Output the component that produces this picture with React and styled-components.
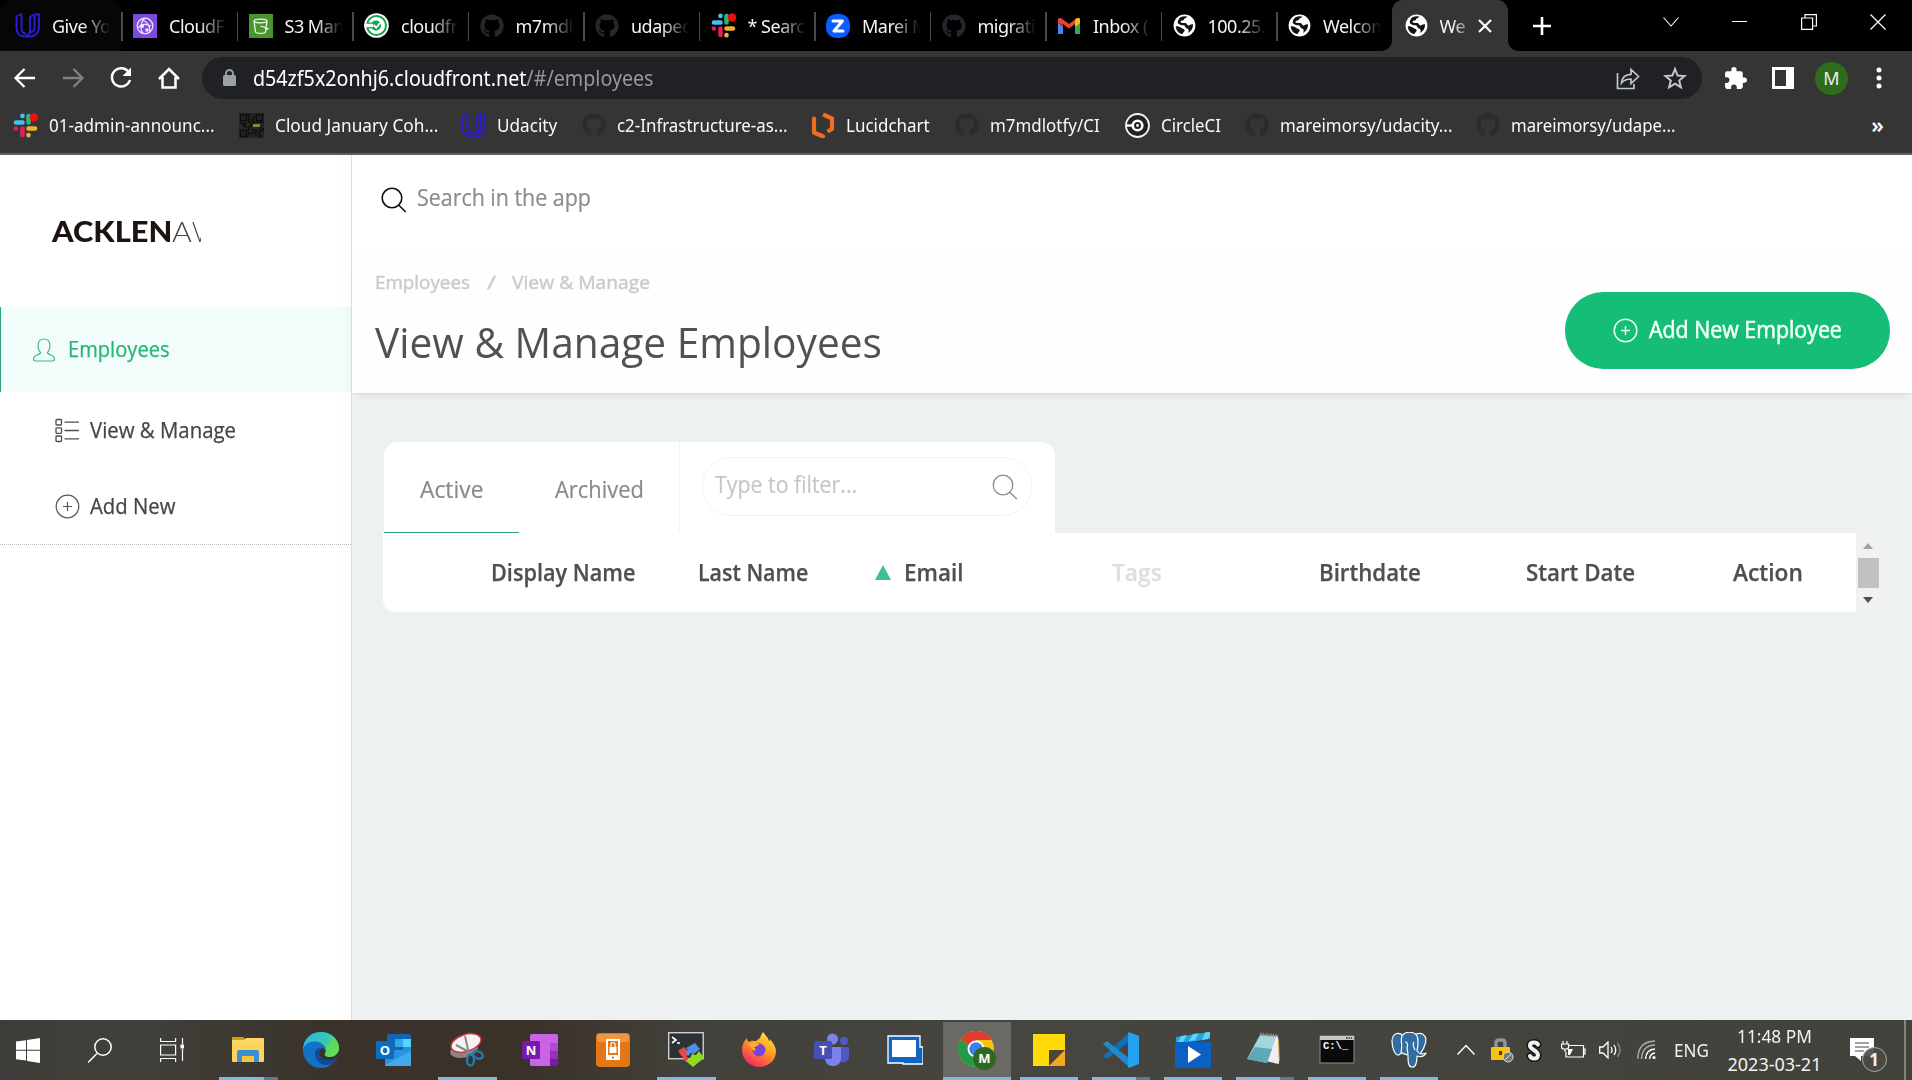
import React, { useLayoutEffect, useRef, useState } from "react";
import styled, { createGlobalStyle, css } from "styled-components";
import { FaGithub } from "react-icons/fa";

const UI = `"Noto Sans", "Open Sans", sans-serif`;
const PAGE = `"Open Sans", "Noto Sans", sans-serif`;

const Global = createGlobalStyle`
  * { box-sizing: border-box; }
  html, body { margin: 0; padding: 0; overflow: hidden; background: #fff; }
  svg { display: block; flex: none; }
`;

/* ---------- text that keeps a fixed measure ---------- */
const FitBox = styled.span`
  display: block;
  flex: none;
  width: ${(p) => p.$w}px;
  white-space: nowrap;
`;
const FitInner = styled.span`
  display: inline-block;
  transform-origin: 0 50%;
`;
function Fit({ w, children }) {
  const ref = useRef(null);
  const [scale, setScale] = useState(1);
  useLayoutEffect(() => {
    if (ref.current) setScale(w / ref.current.offsetWidth);
  }, [w]);
  return (
    <FitBox $w={w}>
      <FitInner ref={ref} style={{ transform: `scaleX(${scale})` }}>
        {children}
      </FitInner>
    </FitBox>
  );
}

/* ---------- shell ---------- */
const Screen = styled.div`
  width: 1912px;
  height: 1080px;
  display: flex;
  flex-direction: column;
  overflow: hidden;
  font-family: ${UI};
`;

/* ---------- browser chrome ---------- */
const TabStrip = styled.div`
  display: flex;
  height: 51px;
  background: #000;
  color: #f6f6f6;
  font-size: 18px;
`;
const Tab = styled.div`
  position: relative;
  display: flex;
  align-items: center;
  flex: none;
  width: ${(p) => (p.$first ? 121.5 : 115.5)}px;
  padding-left: ${(p) => (p.$first ? 15 : p.$active ? 12.5 : 11.5)}px;
  ${(p) =>
    p.$first &&
    css`
      background: #060606;
      border-radius: 12px 12px 0 0;
    `}
  ${(p) =>
    p.$line &&
    css`
      &::after {
        content: "";
        position: absolute;
        right: -1px;
        top: 12px;
        width: 1.5px;
        height: 29px;
        background: #4a4a4a;
      }
    `}
  ${(p) =>
    p.$active &&
    css`
      background: #353535;
      border-radius: 11px 11px 0 0;
      &::before,
      &::after {
        content: "";
        position: absolute;
        bottom: 0;
        width: 10px;
        height: 10px;
      }
      &::before {
        left: -10px;
        background: radial-gradient(circle at 0 0, transparent 9.5px, #353535 10px);
      }
      &::after {
        right: -10px;
        background: radial-gradient(circle at 100% 0, transparent 9.5px, #353535 10px);
      }
    `}
`;
const TabText = styled.span`
  flex: none;
  width: ${(p) => p.$w}px;
  margin-left: 12px;
  overflow: hidden;
  white-space: pre;
  letter-spacing: -0.5px;
  line-height: 28px;
  mask-image: linear-gradient(90deg, #000 ${(p) => (p.$w > 40 ? p.$w - 28 : 12)}px, transparent ${(p) => (p.$w > 40 ? 100 : 130)}%);
`;
const TabClose = styled.span`
  display: flex;
  margin-left: 11px;
`;
const NewTab = styled.div`
  display: flex;
  align-items: center;
  padding-left: 25px;
  flex: 1;
`;
const WindowButtons = styled.div`
  display: flex;
  flex: none;
`;
const WindowButton = styled.div`
  width: 69px;
  height: 43px;
  display: flex;
  align-items: center;
  justify-content: center;
`;

const Toolbar = styled.div`
  display: flex;
  align-items: center;
  height: 54px;
  padding: 0 13px;
  background: #353535;
`;
const NavButtons = styled.div`
  display: flex;
  gap: 24px;
  width: 189px;
`;
const Omnibox = styled.div`
  display: flex;
  align-items: center;
  flex: none;
  width: 1500px;
  height: 42px;
  padding: 0 15px 0 18.5px;
  border-radius: 21px;
  background: #202124;
  color: #fff;
  font-size: 21px;
  line-height: 40px;
`;
const UrlText = styled.div`
  flex: 1;
  padding-left: 15.5px;
`;
const Dim = styled.span`
  color: #95989c;
`;
const OmniIcons = styled.div`
  display: flex;
  gap: 23px;
`;
const ToolIcons = styled.div`
  display: flex;
  align-items: center;
  flex: 1;
  padding-left: 21px;
`;
const Avatar = styled.div`
  width: 33px;
  height: 33px;
  flex: none;
  margin: 0 28px 0 21px;
  border-radius: 50%;
  background: #2f6b1c;
  color: #e8f0e5;
  font-size: 18px;
  line-height: 33px;
  text-align: center;
`;
const PanelIcon = styled.div`
  width: 22px;
  height: 22px;
  flex: none;
  margin-left: 24px;
  border: 3px solid #fff;
  border-right-width: 8px;
`;

const Bookmarks = styled.div`
  display: flex;
  height: 50px;
  padding: 0 0 8px 12.5px;
  align-items: center;
  background: #353535;
  border-bottom: 2px solid #606060;
  color: #fafafa;
  font-size: 18px;
  line-height: 26px;
`;
const Bookmark = styled.div`
  display: flex;
  align-items: center;
  flex: none;
  gap: 11px;
  width: ${(p) => p.$w}px;
`;
const More = styled.div`
  flex: 1;
  padding-right: 28px;
  padding-bottom: 3px;
  text-align: right;
  font-size: 22px;
  font-weight: 600;
  line-height: 22px;
`;

/* ---------- web page ---------- */
const Page = styled.div`
  display: flex;
  height: 865px;
  font-family: ${PAGE};
  background: #edf1f2;
`;
const Sidebar = styled.aside`
  width: 352px;
  flex: none;
  background: linear-gradient(90deg, #fff 336px, #fdfdfd);
  border-right: 1px solid #dcdede;
`;
const Logo = styled.div`
  display: flex;
  height: 152px;
  width: 201px;
  padding: 59px 0 0 52px;
  overflow: hidden;
  font-family: Lato, sans-serif;
  font-size: 28px;
  line-height: 34px;
  font-weight: 900;
  color: #1d1311;
`;
const LogoThin = styled.span`
  display: flex;
  font-weight: 300;
  color: #444;
`;
const NavItem = styled.div`
  display: flex;
  align-items: center;
  height: ${(p) => p.$h}px;
  gap: ${(p) => (p.$active ? 11.5 : 10)}px;
  padding-left: ${(p) => (p.$active ? 31 : 54.5)}px;
  font-size: 21.5px;
  line-height: 30px;
  color: ${(p) => (p.$active ? "#25b574" : "#454545")};
  -webkit-text-stroke: 0.25px currentColor;
  ${(p) =>
    p.$active &&
    css`
      border-left: 1px solid #2ea182;
      background: linear-gradient(90deg, #f2fdfb 336px, #eef9f7);
    `}
`;
const SideRule = styled.div`
  border-top: 1px dotted #bcbcbc;
`;

const Main = styled.main`
  flex: 1;
  display: flex;
  flex-direction: column;
`;
const AppSearch = styled.div`
  display: flex;
  align-items: center;
  gap: 9.5px;
  height: 101px;
  padding: 0 0 11px 29px;
  background: #fff;
  border-bottom: 1px solid #fbfbfb;
  font-size: 23px;
  line-height: 30px;
  color: #8c8c8c;
  -webkit-text-stroke: 0.2px currentColor;
`;
const PageHeader = styled.header`
  display: flex;
  justify-content: space-between;
  height: 137px;
  padding: 13px 22px 0;
  background: #fefefe;
  box-shadow: 0 5px 8px -4px rgba(90, 100, 95, 0.16), 0 1px 0 rgba(90, 100, 95, 0.06);
`;
const Crumbs = styled.div`
  display: flex;
  height: 26px;
  padding-left: 0.5px;
  font-size: 19px;
  line-height: 26px;
  color: #cbcbcb;
  -webkit-text-stroke: 0.5px currentColor;
`;
const Slash = styled.span`
  margin: 0 16px 0 17px;
`;
const Title = styled.h1`
  margin: 17px 0 0 0.5px;
  font-size: 42.5px;
  font-weight: 400;
  line-height: 60px;
  color: #515151;
`;
const AddButton = styled.div`
  display: flex;
  align-items: center;
  gap: 11px;
  width: 325px;
  height: 77px;
  margin-top: 23px;
  padding: 0 0 1px 48px;
  border-radius: 38px;
  background: #15bd76;
  color: #effff8;
  font-size: 23px;
  line-height: 30px;
  -webkit-text-stroke: 0.6px currentColor;
`;
const Content = styled.section`
  padding: 49px 32px 0 31px;
`;
const FilterCard = styled.div`
  display: flex;
  width: 671px;
  height: 91px;
  margin-left: 1px;
  border-radius: 14px 14px 0 0;
  background: #fff;
  font-size: 23px;
  line-height: 30px;
  color: #8a8a8a;
  -webkit-text-stroke: 0.2px currentColor;
`;
const FilterTab = styled.div`
  width: ${(p) => p.$w}px;
  padding: 32px 0 0 36px;
  border-bottom: ${(p) => (p.$on ? "1px solid #2ea182" : "0")};
`;
const FilterInputArea = styled.div`
  flex: 1;
  padding: 15px 0 0 22px;
  border-left: 1px solid #f2f4f4;
`;
const FilterInput = styled.div`
  display: flex;
  align-items: center;
  justify-content: space-between;
  width: 330px;
  height: 59px;
  padding: 0 13.5px 0 12px;
  border: 1px solid #f3f3f3;
  border-radius: 29px;
  color: #c6c6c6;
`;
const Lift = styled.span`
  padding-bottom: ${(p) => p.$by}px;
`;
const TableWrap = styled.div`
  display: flex;
  height: 79px;
`;
const HeadRow = styled.div`
  display: grid;
  grid-template-columns: 107.5px repeat(6, 207px) 1fr;
  align-items: center;
  width: 1473px;
  padding-bottom: 1px;
  background: #fff;
  border-radius: 0 0 0 12px;
  font-size: 23px;
  font-weight: 600;
  line-height: 30px;
  color: #4f4f4f;
  -webkit-text-stroke: 0.25px currentColor;
`;
const HeadCell = styled.div`
  display: flex;
  align-items: center;
  color: ${(p) => (p.$muted ? "#dedede" : "inherit")};
`;
const SortMark = styled.span`
  width: 0;
  margin-left: -30px;
  margin-right: 13px;
  border: 8.5px solid transparent;
  border-top: 0;
  border-bottom: 15px solid #41c08b;
`;
const Scrollbar = styled.div`
  display: flex;
  flex-direction: column;
  align-items: center;
  width: 24px;
  padding: 10px 0 0 0;
  background: #f1f1f1;
`;
const Arrow = styled.span`
  border: 5.5px solid transparent;
  ${(p) => (p.$up ? "border-top: 0; border-bottom: 6.5px solid #a3a3a3;" : "border-bottom: 0; border-top: 6.5px solid #4f4f4f;")}
`;
const Thumb = styled.span`
  width: 21px;
  height: 30px;
  margin: 9px 0 9px;
  background: #c1c1c1;
`;

/* ---------- taskbar ---------- */
const Taskbar = styled.footer`
  display: flex;
  height: 60px;
  background: linear-gradient(90deg, #3d3c38 0, #41403b 130px, #3a332c 320px, #3a3129 520px, #42403a 680px, #464540 1000px, #42423d 1912px);
  color: #f2f2f2;
`;
const SystemKeys = styled.div`
  display: flex;
  align-items: center;
  gap: 48px;
  flex: none;
  width: 211.5px;
  padding-left: 16px;
`;
const Slot = styled.div`
  position: relative;
  display: flex;
  align-items: center;
  justify-content: center;
  flex: none;
  width: ${(p) => p.$w}px;
  ${(p) => p.$run && css`
    &::after {
      content: "";
      position: absolute;
      bottom: 0;
      left: ${p.$run === "wide" ? 2 : 7}px;
      right: ${p.$run === "wide" ? 2 : 7}px;
      height: 3px;
      background: ${p.$run === "multi" ? "linear-gradient(90deg, #84b8df 76%, #5a7b93 76%)" : "#84b8df"};
    }
  `}
`;
const ActiveSlot = styled(Slot)`
  background: linear-gradient(#6a6966, #6a6966) center bottom / 68px 58px no-repeat;
`;
const Tray = styled.div`
  display: flex;
  align-items: center;
  flex: 1;
  padding-left: 12.5px;
  font-size: 18px;
  line-height: 28px;
`;
const TrayGap = styled.div`
  width: ${(p) => p.$w}px;
  flex: none;
`;
const Clock = styled.div`
  display: flex;
  flex: none;
  flex-direction: column;
  align-items: center;
  width: 94px;
  padding-bottom: 1px;
`;
const Notice = styled.div`
  position: relative;
  flex: none;
  width: 42px;
  height: 36px;
  margin-left: 28px;
`;
const NoticeCount = styled.div`
  position: absolute;
  left: 12px;
  top: 15px;
  width: 25px;
  height: 25px;
  border: 1px solid #a9a9a5;
  border-radius: 50%;
  background: rgba(74, 74, 70, 0.92);
  font-size: 17px;
  font-weight: 700;
  line-height: 23px;
  text-align: center;
`;
const ShowDesktop = styled.div`
  width: 2px;
  flex: none;
  height: 60px;
  margin-left: 12px;
  background: #85857f;
`;

/* ---------- browser icons ---------- */
const Udacity = () => (
  <svg width="25" height="25" viewBox="0 0 25 25" fill="none" stroke="#2a1bd6" strokeWidth="1.9" strokeLinejoin="round">
    <path d="M1.500 3.500 6.500 1.200V15c0 3.500 1.500 5.500 5 6M1.500 3.500V15c0 5.500 3.500 8.500 8 8.500" />
    <path d="M9.500 23.500c3.500 0 5.500-2 5.500-6V4l4.500-2.500L24 1.200V14c0 6-4 9.500-9 9.500h-5.500M19.500 1.500V14c0 3-1.500 5-4.500 5.500" />
  </svg>
);
const CloudFront = () => (
  <svg width="24" height="24" viewBox="0 0 24 24">
    <rect width="24" height="24" fill="#7d4bdb" />
    <g fill="none" stroke="#efe6ff" strokeWidth="1.2">
      <circle cx="12" cy="12" r="7.800" />
      <path d="M12 4.200c-5 4-5 11.500-2 15M9 6c5 1 8 6 8 12M5 14c3-4 8-4.500 13-2" />
      <circle cx="9" cy="12" r="1.500" fill="#efe6ff" />
      <circle cx="14" cy="16" r="1.200" fill="#efe6ff" />
    </g>
  </svg>
);
const Bucket = () => (
  <svg width="24" height="24" viewBox="0 0 24 24">
    <rect width="24" height="24" fill="#4b932f" />
    <g fill="none" stroke="#eef8e9" strokeWidth="1.300">
      <ellipse cx="11.500" cy="7" rx="6.500" ry="1.800" />
      <path d="M5 7.200 6.500 18c.3 1.800 9.700 1.800 10 0L18 7.200M11.500 12l7.500 2.500c-.5 1-2 .5-3 0" />
    </g>
  </svg>
);
const CircleCI = ({ ok }) =>
  ok ? (
    <svg width="25" height="25" viewBox="0 0 25 25">
      <circle cx="12.500" cy="12.500" r="12.300" fill="#fff" />
      <circle cx="12.500" cy="12.500" r="10.500" fill="#0fa851" />
      <path d="M4.500 9.500a8.500 8.500 0 1 1 0 6H8a5 5 0 1 0 0-6z" fill="#fff" />
      <path d="M.5 10.800H9v3.400H.5z" fill="#fff" />
      <path d="m9.500 12 2.700 2.700 4-5" stroke="#fff" strokeWidth="1.800" fill="none" />
    </svg>
  ) : (
    <svg width="25" height="25" viewBox="0 0 25 25">
      <circle cx="12.500" cy="12.500" r="11.500" fill="#222" stroke="#f5f5f5" strokeWidth="1.800" />
      <circle cx="12.500" cy="12.500" r="4.800" fill="none" stroke="#fff" strokeWidth="2.600" />
      <path d="M1 12.500h7" stroke="#fff" strokeWidth="2.400" />
      <circle cx="12.500" cy="12.500" r="1.400" fill="#fff" />
    </svg>
  );
const Github = ({ color }) => <FaGithub size={24} color={color} />;
const Slack = () => (
  <svg width="25" height="25" viewBox="0 0 25 25" strokeWidth="4.600" strokeLinecap="round">
    <path d="M3 9.500h6.500M9.500 2.800v.1" stroke="#42c2ec" />
    <path d="M15.500 3v6.500" stroke="#2fb37c" />
    <path d="M22 15.500h-6.500M15.500 22.200v-.1" stroke="#ecb234" />
    <path d="M9.500 22v-6.500M2.800 15.500h.1" stroke="#e01e5a" />
    <circle cx="21" cy="4.500" r="4.200" fill="#f20d0d" />
  </svg>
);
const Zoom = () => (
  <svg width="24" height="24" viewBox="0 0 24 24">
    <rect width="24" height="24" rx="10" fill="#0b5cff" />
    <path d="M7 7h9.500L8 17h9" fill="none" stroke="#fff" strokeWidth="3" strokeLinejoin="round" strokeLinecap="round" />
  </svg>
);
const Gmail = () => (
  <svg width="24" height="24" viewBox="0 0 24 24">
    <path d="M1 8v12h5V11z" fill="#4285f4" />
    <path d="M18 11v9h5V8z" fill="#34a853" />
    <path d="m1 5 5 4v4L1 9z" fill="#c5221f" />
    <path d="m18 9 5-4v4l-5 4z" fill="#fbbc04" />
    <path d="M1 9V6c0-2 2-2.500 3.500-1.500L12 10l7.500-5.500C21 3.500 23 4 23 6l-5 4-6 4.500L6 10z" fill="#ea4335" />
    <path d="m18 5.600 1.500-1.100C21 3.500 23 4 23 6v3l-5 3.800z" fill="#fbbc04" />
  </svg>
);
const Globe = () => (
  <svg width="23" height="23" viewBox="0 0 23 23">
    <circle cx="11.500" cy="11.500" r="10.900" fill="#fff" />
    <path d="M2.800 12.500c2-.6 4 .2 5.500 1.500 1.500 1 3 .5 3.500 2.500-.5 1.500-2 1.800-2.200 3.700C5.500 19.500 2.800 16 2.800 12.500zM8 3c2-1 5-1 6.500-.3-1 1.500-3 1-3.500 2.800-.5 1.500-3 .5-3.500 2.200-.3 1.500 3 1 5 1.300 1.500.3 1.500 2.500 3 2.500s1.500-1.500 4.500-1.200c.2 4.500-2.200 7-5 8.700 1-2.500 1-4-1-4.500-2-.6-1.500-3-3.500-3.200-2 0-4.500-.5-5.800-2.300C4.500 6.500 6 4 8 3z" fill="#111" />
  </svg>
);
const Qr = () => (
  <svg width="25" height="25" viewBox="0 0 25 25">
    <rect width="25" height="25" fill="#242422" />
    <g fill="none" stroke="#0c0c0c" strokeWidth="1.500">
      <rect x="1.500" y="1.500" width="6" height="6" />
      <rect x="17.500" y="1.500" width="6" height="6" />
      <rect x="1.500" y="17.500" width="6" height="6" />
      <path d="M10 1v6h5V2M1 10h5v4h6v-4h4M10 15v8M13 17h4v6M20 15h4v3h-4v5h4M17 9h7M12 20h5M3 12h4M9 9h12" strokeDasharray="3 1" />
    </g>
    <rect x="14" y="11" width="7" height="3" fill="#838748" />
  </svg>
);
const Lucid = () => (
  <svg width="24" height="26" viewBox="0 0 24 26" fill="none" stroke="#f26b21" strokeWidth="4.200" strokeLinejoin="round">
    <path d="M3 6.500v14l9 4" strokeLinecap="round" />
    <path d="m12 2.300 9 4.200V17l-4.500 2.500" />
  </svg>
);
const stroke = (w = 2.4, c = "#fff") => ({ fill: "none", stroke: c, strokeWidth: w });
const Back = ({ flip, color = "#fff" }) => (
  <svg width="24" height="24" viewBox="0 0 24 24" {...stroke(2.3, color)}>
    {flip ? <path d="M2 12h19M12.500 3l9 9-9 9" /> : <path d="M22 12H3M11.500 3l-9 9 9 9" />}
  </svg>
);
const Reload = () => (
  <svg width="24" height="24" viewBox="0 0 24 24">
    <path d="M20 6.500A9.200 9.200 0 1 0 21 14" {...stroke(2.5)} />
    <path d="M22 1.500v8.500h-8.500z" fill="#fff" />
  </svg>
);
const Home = () => (
  <svg width="24" height="24" viewBox="0 0 24 24" {...stroke(2.5)}>
    <path d="M2 13 12 3l10 10M5.500 11v10.500h13V11" />
  </svg>
);
const Padlock = () => (
  <svg width="17" height="20" viewBox="0 0 17 20">
    <rect x="2" y="7" width="13" height="11" rx="1.500" fill="#9aa0a6" />
    <path d="M5 8V5.500a3.500 3.500 0 0 1 7 0V8" {...stroke(1.9, "#9aa0a6")} />
  </svg>
);
const Share = () => (
  <svg width="24" height="24" viewBox="0 0 24 24" {...stroke(1.7, "#c4c7ca")}>
    <path d="M1.500 7v15.500H18V18M5.500 17c.5-6 3.500-8.500 9.500-8.700V3.500l7.500 7-7.500 7V13c-4 0-7 1-9.500 4z" />
  </svg>
);
const Star = () => (
  <svg width="24" height="24" viewBox="0 0 24 24" {...stroke(2, "#c4c7ca")}>
    <path d="m12 3 2.600 6.500 6.900.5-5.300 4.500 1.700 6.800L12 17.600l-5.900 3.700 1.700-6.800L2.500 10l6.900-.5z" />
  </svg>
);
const Puzzle = () => (
  <svg width="25" height="25" viewBox="0 0 24 24">
    <path fill="#fff" d="M20.500 11H19V7a2 2 0 0 0-2-2h-4V3.500a2.500 2.500 0 0 0-5 0V5H4a2 2 0 0 0-2 2v3.800h1.500a2.700 2.700 0 0 1 0 5.400H2V20a2 2 0 0 0 2 2h3.800v-1.500a2.700 2.700 0 0 1 5.400 0V22H17a2 2 0 0 0 2-2v-4h1.500a2.500 2.500 0 0 0 0-5z" />
  </svg>
);
const Dots = () => (
  <svg width="6" height="22" viewBox="0 0 6 22" fill="#fff">
    <circle cx="3" cy="3" r="2.500" /><circle cx="3" cy="11" r="2.500" /><circle cx="3" cy="19" r="2.500" />
  </svg>
);

/* ---------- page icons ---------- */
const Magnifier = ({ color, w = 1.5 }) => (
  <svg width="26" height="26" viewBox="0 0 26 26" {...stroke(w, color)}>
    <circle cx="11" cy="11" r="9.800" /><path d="m17.800 18.200 7 6.800" />
  </svg>
);
const Person = () => (
  <svg width="24" height="24" viewBox="0 0 24 24" {...stroke(1.2, "#35bd82")}>
    <path d="M8.700 14.700C6.500 12.500 6 9.500 6.200 6.500 6.500 3 9 1 12 1s5.500 2 5.800 5.500c.2 3-.3 6-2.500 8.200 1 2.500 7.200 2 7.200 6.300 0 1.500-.5 2-1.500 2H3c-1 0-1.500-.5-1.500-2 0-4.300 6.200-3.800 7.200-6.300z" />
  </svg>
);
const ListIcon = () => (
  <svg width="25" height="25" viewBox="0 0 25 25" {...stroke(1.3, "#4d4d4d")}>
    <rect x="1" y="1.500" width="5.500" height="5.500" rx=".8" /><rect x="1" y="9.800" width="5.500" height="5.500" rx=".8" /><rect x="1" y="18" width="5.500" height="5.500" rx=".8" />
    <path d="M9.500 4.200H24M9.500 12.500H24M9.500 20.800H24" />
  </svg>
);
const PlusCircle = ({ color, w = 1.2 }) => (
  <svg width="25" height="25" viewBox="0 0 25 25" {...stroke(w, color)}>
    <circle cx="12.500" cy="12.500" r="11.300" /><path d="M8 12.500h9M12.500 8v9" />
  </svg>
);

/* ---------- taskbar icons ---------- */
const Art = ({ children }) => (
  <svg width="36" height="36" viewBox="0 0 36 36">{children}</svg>
);
const Letter = styled.text`
  font-family: ${PAGE};
  font-weight: 700;
  font-size: 13px;
  fill: #fff;
  text-anchor: middle;
`;
const Explorer = () => (
  <Art>
    <path d="M2 6q0-1 1-1h10l3 3H2z" fill="#d99a12" />
    <rect x="2" y="8" width="32" height="22" rx="1" fill="#fcd35c" />
    <path d="M2 8h12l2-2h17q1 0 1 1v4H2z" fill="#ffd764" />
    <path d="M7 30V20q0-2 2-2h18q2 0 2 2v10h-5v-6H12v6z" fill="#3c8fd3" />
    <path d="M12 30v-6h12v6z" fill="#f8c53a" />
  </Art>
);
const Edge = () => (
  <Art>
    <defs>
      <linearGradient id="eg" x1="0" x2="1" y1=".2" y2=".6"><stop stopColor="#2cb3e6" /><stop offset=".6" stopColor="#36c8b4" /><stop offset="1" stopColor="#6fe04a" /></linearGradient>
    </defs>
    <circle cx="18" cy="18" r="18" fill="#1372c6" />
    <path d="M0 18C0 7 8 0 18 0s18 7 18 16c0 5-4 9-9 9-4 0-6-1.500-5-3.500C25 17 20 9 11 9.500 5 10 1 13 0 18z" fill="url(#eg)" />
    <path d="M12 20c-1 8 6 14 13 13 4-.5 7-2.500 9-5.500.5-1-.5-1.500-1.200-1C25 31 17 27 16 21c0-2 .5-4 2-5.500-3 .5-5.500 2-6 4.500z" fill="#104a94" />
    <path d="M16 21c1 6 9 10 16.800 5.500L36 24v-6c-1 4-4.500 7-9 7-4 0-6-1.500-5-3.500 1-1.800 0-4-2-6-2 .5-4 2.500-4 5.500z" fill="#3a322c" />
    <path d="M27 25c5 0 9-4 9-9v-1c-1-3-2-6-4-8-4 0-6 6-9 10 .500 2-.3 3.300-1 4.500-1 2 1 3.500 5 3.500z" fill="#62d955" opacity=".75" />
  </Art>
);
const Outlook = () => (
  <Art>
    <rect x="11" y="2" width="24" height="21" rx="1.500" fill="#1066b5" />
    <rect x="19" y="7" width="8" height="8" fill="#32a9e7" /><rect x="27" y="7" width="8" height="8" fill="#58d2fa" /><rect x="27" y="15" width="8" height="8" fill="#2292dc" />
    <path d="M9 18h26v16H10q-1 0-1-1z" fill="#2a94e0" /><path d="m9 33 26-14v15H10z" fill="#43a9ef" />
    <rect x="0" y="9" width="18" height="18" rx="1.500" fill="#0f6cbd" /><Letter x="9" y="23">O</Letter>
  </Art>
);
const Snip = () => (
  <Art>
    <ellipse cx="15" cy="18" rx="14" ry="7.500" transform="rotate(-12 15 18)" fill="#8b8684" />
    <ellipse cx="17" cy="11" rx="15.500" ry="8.500" transform="rotate(-18 17 11)" fill="#f3f3f3" stroke="#d4343c" strokeWidth="1.500" />
    <path d="m16 4 4 18M7 13l15 8" stroke="#888" strokeWidth="2" />
    <g {...stroke(2.5, "#2279ae")}><ellipse cx="21.500" cy="28" rx="3.500" ry="5.500" /><ellipse cx="29" cy="23" rx="5" ry="3.500" transform="rotate(25 29 23)" /></g>
  </Art>
);
const OneNote = () => (
  <Art>
    <rect x="8" y="2" width="28" height="32" rx="1.500" fill="#ca64e6" /><path d="M28 11h8v8h-8z" fill="#ae4bd5" /><path d="M28 19h8v8h-8z" fill="#9332bf" /><path d="M28 27h8v7h-8z" fill="#7719aa" />
    <rect x="0" y="9" width="18" height="18" rx="1.500" fill="#7719aa" /><Letter x="9" y="23">N</Letter>
  </Art>
);
const Phone = () => (
  <Art>
    <rect x="1" y="1" width="34" height="34" rx="4" fill="#e47713" /><rect x="2" y="2" width="32" height="8" rx="3" fill="#f2a45a" opacity=".7" />
    <rect x="11" y="7" width="14" height="21" rx="1" fill="#fff" /><rect x="13" y="9" width="10" height="14" fill="#e47713" />
    <rect x="14.500" y="15" width="7" height="6" fill="#fff" /><path d="M16 15v-2.500a2 2 0 0 1 4 0V15" {...stroke(1.2)} /><circle cx="18" cy="25.500" r="1" fill="#864" />
  </Art>
);
const Terminal = () => (
  <Art>
    <rect x=".7" y=".7" width="34.500" height="26" fill="#2c3136" stroke="#d0d0d0" strokeWidth="1.400" />
    <path d="m4 5 4 3-4 3M9 11h3" {...stroke(1.6)} />
    <path d="m10 19 6-4 3 3 3 4-3 2 2 4-3 2z" fill="#e8474a" /><path d="m18 16 9-5 5 6-6 5-4-1-1 3-4-4 3-2z" fill="#4f8ee8" /><path d="m18 29 4-3 2-4 4 1 3-4 5 7-11 9z" fill="#8edc22" />
  </Art>
);
const Firefox = () => (
  <Art>
    <defs><linearGradient id="ff" x1=".8" x2=".2" y2="1"><stop stopColor="#ffe83f" /><stop offset=".45" stopColor="#ff9a22" /><stop offset="1" stopColor="#f5196b" /></linearGradient></defs>
    <path d="M1 18c0-5 2-9 5-12 0 2 1 3 2 4 3-2 5-1 7-1 2-1 2-2 4-3 1-3 2-5 3-6 2 3 5 5 6 9 1 0 1-1 1-2 3 4 6 8 6 12C35 29 27 35 18 35S1 27 1 18z" fill="url(#ff)" />
    <circle cx="18" cy="18" r="6.500" fill="#7944d6" /><path d="M7 12c5-3 8 0 11 0 0 2-4 2-5 4 2 0 2 2 0 3z" fill="#ffae26" />
  </Art>
);
const Teams = () => (
  <Art>
    <circle cx="18.500" cy="7" r="5.500" fill="#7b83eb" /><circle cx="30" cy="9" r="4" fill="#5059c9" />
    <path d="M24 15h11v9c0 7-8 8-11 4z" fill="#5059c9" /><path d="M11 15h16v11c0 6-4 8-8 8-5 0-8-3-8-8z" fill="#7b83eb" />
    <rect x="0" y="9" width="18" height="18" rx="1.500" fill="#464eb8" /><Letter x="9" y="23">T</Letter>
  </Art>
);
const Remote = () => (
  <Art>
    <path d="M1 4h32v11h3v17H16v-1H1z" fill="#0f66c2" stroke="#fff" strokeWidth="1.300" /><path d="M5 8h24v17H5z" fill="#fff" />
  </Art>
);
const Chrome = () => (
  <svg width="38" height="42" viewBox="0 0 38 42">
    <circle cx="18" cy="20" r="18" fill="#fbc116" />
    <path d="M18 20 2.400 11a18 18 0 0 1 31.200 0H18z" fill="#e33b2e" /><path d="M2.400 11a18 18 0 0 0 15.600 27l8-13.500-8-4.500z" fill="#229a4a" />
    <circle cx="18" cy="20" r="8.500" fill="#fff" /><circle cx="18" cy="20" r="6.700" fill="#3c7fee" />
    <circle cx="26.500" cy="29.500" r="11.500" fill="#2c6a1d" /><Letter x="26.500" y="34">M</Letter>
  </svg>
);
const Sticky = () => (<Art><path d="M2 2h32v16L18 34H2z" fill="#fcdb09" /><path d="M18 18h16L18 34z" fill="#4b4437" /><path d="M34 18v16H18z" fill="#f4a91a" /></Art>);
const Code = () => (
  <Art>
    <path d="M0 24 27 0v9L4 27z" fill="#1070b3" /><path d="m0 12 4-3 23 18v9z" fill="#2489ca" /><path d="M26 0 36 4v28l-10 4-1-1V1z" fill="#24a0ee" />
  </Art>
);
const Movies = () => (
  <Art>
    <path d="M1 5 35 0v7L14 10H1z" fill="#1ba7df" /><path d="m6 4 6-1-4 7H3zM18 2l6-.8-4 7-6 .8zM30 .6l5-.6v4l-2 3-6 .8z" fill="#5fd2f5" /><rect x="0" y="10" width="36" height="26" rx="1.500" fill="#0c60c4" /><path d="M13 14v17l13-8.500z" fill="#fff" />
  </Art>
);
const Notepad = () => (
  <Art>
    <path d="m12 5 20 2 1 22-5 3z" fill="#c6872d" /><path d="m13 3 18 1 1 28-13-3z" fill="#eceff0" /><path d="M13 3 29 5 20 31 0 27z" fill="#a5d5dc" /><path d="m8 15 17 2-5 14L0 27z" fill="#5fa8b6" /><path d="m13 2 18 2" stroke="#8c8c8c" strokeWidth="3" strokeDasharray="1.500 1" />
  </Art>
);
const Mono = styled(Letter)`
  font-family: "Liberation Mono", monospace;
  font-size: 10.5px;
  text-anchor: start;
`;
const Cmd = () => (
  <Art><rect x="1" y="4" width="34" height="27" fill="#0a0a0a" stroke="#8b8b8b" /><rect x="1" y="4" width="34" height="4" fill="#c7c7c7" /><path d="M27 6h6" stroke="#555" strokeWidth="2" strokeDasharray="1.500 1" /><Mono x="4" y="17">C:\_</Mono></Art>
);
const Postgres = () => (
  <Art>
    <g fill="#336c9e" stroke="#fff" strokeWidth="1.200" strokeLinejoin="round">
      <path d="M10 2C4 0 1 4 1 9c0 7 3 14 6 14 2 0 4-3 5-4V4zM25 2c6-2 9 1 10 5 0 6-4 13-7 16l-5-3z" />
      <path d="M11 4c3-5 12-5 15 0 2 5 1 10 0 15 3 4 6 3 9 2-2 4-6 4-9 3 0 5-1 12-5 11-4 0-4-6-4-12-3-1-7-1-7-4 2-5-1-10 1-15z" />
      <path d="M14 10c3 0 3 3 2 6l1 6M23 10c-2 2 0 6 1 8" fill="none" />
    </g>
  </Art>
);

const pinned = [
  [Explorer, "multi"], [Edge], [Outlook], [Snip, "one"], [OneNote], [Phone], [Terminal, "one"], [Firefox], [Teams],
  [Remote], [Chrome, "wide"], [Sticky, "one"], [Code, "multi"], [Movies, "one"], [Notepad, "multi"], [Cmd, "one"], [Postgres, "one"],
];

const tabs = [
  ["Give Yo", <Udacity />], ["CloudF", <CloudFront />], ["S3 Man", <Bucket />], ["cloudfr", <CircleCI ok />],
  ["m7mdl", <Github color="#24272b" />], ["udapeo", <Github color="#24272b" />], ["* Searc", <Slack />], ["Marei M", <Zoom />],
  ["migrati", <Github color="#24272b" />], ["Inbox (", <Gmail />], ["100.25.", <Globe />], ["Welcom", <Globe />],
];

const bookmarks = [
  [226.5, 166, "01-admin-announc...", <Slack />], [221.5, 163, "Cloud January Coh...", <Qr />], [121, 60, "Udacity", <Udacity />],
  [229.5, 170, "c2-Infrastructure-as...", <Github color="#282b2f" />], [144, 84, "Lucidchart", <Lucid />], [170, 110, "m7mdlotfy/CI", <Github color="#282b2f" />],
  [120, 60, "CircleCI", <CircleCI />], [231, 172, "mareimorsy/udacity...", <Github color="#282b2f" />], [220, 164, "mareimorsy/udape...", <Github color="#282b2f" />],
];

const columns = [["Display Name", 144], ["Last Name", 110.5], ["Email", 59.5, "sorted"], ["Tags", 49.5, "muted"], ["Birthdate", 101.5], ["Start Date", 109.5], ["Action", 70]];

export default function App() {
  return (
    <Screen>
      <Global />
      <TabStrip>
        {tabs.map(([name, icon], i) => (
          <Tab key={i} $first={i === 0} $line={i < 11}>
            {icon}
            <TabText $w={58}>{name}</TabText>
          </Tab>
        ))}
        <Tab $active>
          <Globe />
          <TabText $w={27}>We</TabText>
          <TabClose>
            <svg width="14" height="14" viewBox="0 0 14 14" {...stroke(2.2)}><path d="m1 1 12 12M13 1 1 13" /></svg>
          </TabClose>
        </Tab>
        <NewTab>
          <svg width="18" height="18" viewBox="0 0 18 18" {...stroke(2.6)}><path d="M9 0v18M0 9h18" /></svg>
        </NewTab>
        <WindowButtons>
          <WindowButton><svg width="16" height="10" viewBox="0 0 16 10" {...stroke(1.1)}><path d="m.5.5 7.500 8.500 7.500-8.500" /></svg></WindowButton>
          <WindowButton><svg width="15" height="1" viewBox="0 0 15 1"><rect width="15" height="1" fill="#fff" /></svg></WindowButton>
          <WindowButton><svg width="16" height="16" viewBox="0 0 16 16" {...stroke(1.2)}><path d="M.6 4h11v11.400H.6zM4 4V.6h11.400V12H12" /></svg></WindowButton>
          <WindowButton><svg width="16" height="16" viewBox="0 0 16 16" {...stroke(1.2)}><path d="m.5.5 15 15M15.500.5l-15 15" /></svg></WindowButton>
        </WindowButtons>
      </TabStrip>
      <Toolbar>
        <NavButtons><Back /><Back flip color="#818181" /><Reload /><Home /></NavButtons>
        <Omnibox>
          <Padlock />
          <UrlText><Fit w={401}>d54zf5x2onhj6.cloudfront.net<Dim>/#/employees</Dim></Fit></UrlText>
          <OmniIcons><Share /><Star /></OmniIcons>
        </Omnibox>
        <ToolIcons><Puzzle /><PanelIcon /><Avatar>M</Avatar><Dots /></ToolIcons>
      </Toolbar>
      <Bookmarks>
        {bookmarks.map(([slot, w, name, icon], i) => (
          <Bookmark key={i} $w={slot}>{icon}<Fit w={w}>{name}</Fit></Bookmark>
        ))}
        <More>»</More>
      </Bookmarks>

      <Page>
        <Sidebar>
          <Logo><Fit w={120}>ACKLEN</Fit><LogoThin><Fit w={19.5}>A</Fit><Fit w={15.5}>V</Fit></LogoThin></Logo>
          <NavItem $active $h={85}><Person /><Lift $by={2}><Fit w={102}>Employees</Fit></Lift></NavItem>
          <NavItem $h={77}><ListIcon /><Lift $by={2}><Fit w={146}>View &amp; Manage</Fit></Lift></NavItem>
          <NavItem $h={75}><PlusCircle color="#555" /><Lift $by={2}><Fit w={85}>Add New</Fit></Lift></NavItem>
          <SideRule />
        </Sidebar>
        <Main>
          <AppSearch>
            <Magnifier color="#111" w={1.6} />
            <Lift $by={6}><Fit w={174}>Search in the app</Fit></Lift>
          </AppSearch>
          <PageHeader>
            <div>
              <Crumbs><Fit w={95}>Employees</Fit><Slash><Fit w={9}>/</Fit></Slash><Fit w={138}>View &amp; Manage</Fit></Crumbs>
              <Title><Fit w={507}>View &amp; Manage Employees</Fit></Title>
            </div>
            <AddButton><PlusCircle color="#e5fff4" w={1.5} /><Lift $by={2}><Fit w={193}>Add New Employee</Fit></Lift></AddButton>
          </PageHeader>
          <Content>
            <FilterCard>
              <FilterTab $on $w={135}><Fit w={63.5}>Active</Fit></FilterTab>
              <FilterTab $w={160}><Fit w={88.5}>Archived</Fit></FilterTab>
              <FilterInputArea>
                <FilterInput><Lift $by={5}><Fit w={142}>Type to filter...</Fit></Lift><Magnifier color="#8c8c8c" w={1.3} /></FilterInput>
              </FilterInputArea>
            </FilterCard>
            <TableWrap>
              <HeadRow>
                <span />
                {columns.map(([name, w, kind]) => (
                  <HeadCell key={name} $muted={kind === "muted"}>
                    {kind === "sorted" && <SortMark />}
                    <Fit w={w}>{name}</Fit>
                  </HeadCell>
                ))}
              </HeadRow>
              <Scrollbar><Arrow $up /><Thumb /><Arrow /></Scrollbar>
            </TableWrap>
          </Content>
        </Main>
      </Page>

      <Taskbar>
        <SystemKeys>
          <svg width="24" height="25" viewBox="0 0 24 25" fill="#fff"><path d="M0 3.500 10 2.200v9.600H0zM11 2l13-2v11.800H11zM0 12.800h10v9.700L0 21.200zM11 12.800h13V25l-13-2z" /></svg>
          <svg width="24" height="25" viewBox="0 0 24 25" {...stroke(1.5)}><circle cx="15" cy="9" r="8.200" /><path d="M9 15.500 0 24.500" /></svg>
          <svg width="24" height="24" viewBox="0 0 24 24" {...stroke(1.2)}><path d="M.6 0v3.500h15V0M.6 24v-3.500h15V24M.6 7h15v10H.6zM22.500 0v6M22.500 11v12" /><path d="M21 7h3v3h-3z" fill="#fff" /></svg>
        </SystemKeys>
        {pinned.map(([Icon, run], i) => {
          const Cell = run === "wide" ? ActiveSlot : Slot;
          return <Cell key={i} $w={i < 9 ? 73 : 72} $run={run}><Icon /></Cell>;
        })}
        <Tray>
          <svg width="18" height="12" viewBox="0 0 18 12" {...stroke(1.5)}><path d="m.5 10.500 8.500-9 8.500 9" /></svg>
          <TrayGap $w={15} />
          <svg width="24" height="26" viewBox="0 0 24 26"><path d="M6 11V6q0-3 3-3h3q3 0 3 3v5" {...stroke(3.5, "#8f9499")} /><rect x="1" y="10" width="19" height="13" rx="1" fill="#f6c40f" /><rect x="9" y="14" width="3" height="4" fill="#4a3a10" /><circle cx="18" cy="20" r="5" fill="#777" stroke="#ddd" /><path d="m15 23 6-6" stroke="#ddd" /></svg>
          <TrayGap $w={11} />
          <svg width="18" height="25" viewBox="0 0 18 25" strokeLinecap="round"><path d="M13 6.500q-1-2-4-2-4 0-4 3C5 12 13 12 13 17q0 3.500-4 3.500-3 0-4-2.500" {...stroke(7, "#171717")} /><path d="M13 6.500q-1-2-4-2-4 0-4 3C5 12 13 12 13 17q0 3.500-4 3.500-3 0-4-2.500" {...stroke(4, "#f0f0f0")} /></svg>
          <TrayGap $w={18} />
          <svg width="25" height="18" viewBox="0 0 25 18" {...stroke(1.2)}><path d="M8 4.500h14.500v11.500H5V11M22.500 8H24v5h-1.500M2 0v3M6 0v3M.6 3h7v3q0 2-2.500 2H3Q.6 8 .6 6zM4 8v3" /><path d="M7 8h5l-3 6H7z" fill="#fff" stroke="none" /></svg>
          <TrayGap $w={13} />
          <svg width="23" height="18" viewBox="0 0 23 18" {...stroke(1.3)}><path d="M.7 6H4l5-5v16l-5-5H.7zM12 6q2 3 0 6M15 4q3.500 5 0 10" /><path d="M18.500 2q5 7 0 14" stroke="#8b8b87" /></svg>
          <TrayGap $w={15} />
          <svg width="20" height="20" viewBox="0 0 20 20" {...stroke(1.4)}><path d="M12.500 19q.5-5.500 5.500-6M8.500 19Q9 9.500 18 9" /><path d="M4.500 19Q5 5.500 18 5M.8 19Q1 1.500 18 1" stroke="#aaa" /><circle cx="17" cy="17.500" r="1.600" fill="#fff" stroke="none" /></svg>
          <TrayGap $w={16.5} />
          <Fit w={35}>ENG</Fit>
          <TrayGap $w={19} />
          <Clock><Fit w={75}>11:48 PM</Fit><Fit w={94}>2023-03-21</Fit></Clock>
          <Notice>
            <svg width="25" height="36" viewBox="0 0 25 36"><path d="M0 6h24v18H11v5l-6-5H0z" fill="#fff" /><path d="M5 11h14M5 15h14M5 19h9" stroke="#444" strokeWidth="1.200" /></svg>
            <NoticeCount>1</NoticeCount>
          </Notice>
          <ShowDesktop />
        </Tray>
      </Taskbar>
    </Screen>
  );
}
